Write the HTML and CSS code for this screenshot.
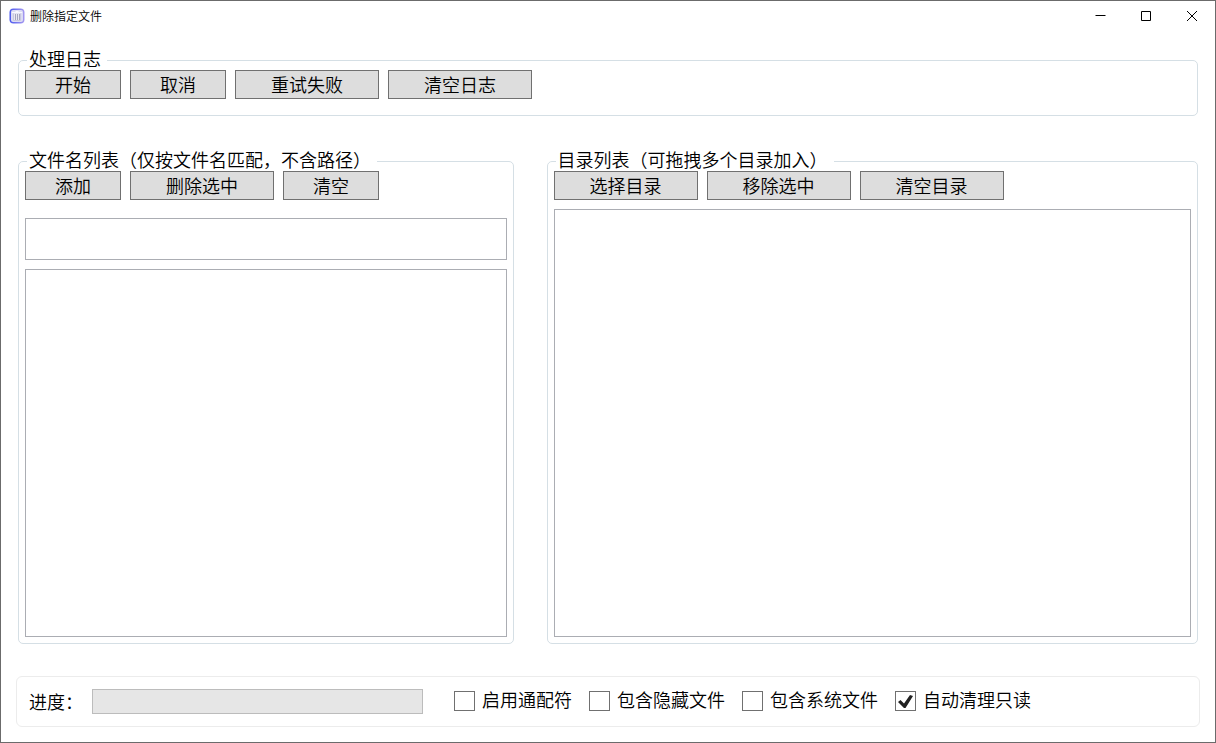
FILE: index.html
```
<!DOCTYPE html>
<html lang="zh-CN">
<head>
    <meta charset="UTF-8">
    <meta name="viewport" content="width=device-width, initial-scale=1.0">
    <link rel="stylesheet" href="styles.css">
    <title>删除指定文件</title>
</head>
<body>
    <header class="titlebar">
        <svg class="app-icon" width="16" height="16" viewBox="0 0 16 16">
            <defs>
                <linearGradient id="iconBg" x1="0" y1="0" x2="1" y2="0">
                    <stop offset="0" stop-color="#4a58ee"/>
                    <stop offset="1" stop-color="#a79af0"/>
                </linearGradient>
            </defs>
            <rect x="0.5" y="0.5" width="15" height="15" rx="4" fill="url(#iconBg)"/>
            <rect x="2" y="2" width="12" height="12" rx="2" fill="#dcdcf4"/>
            <path d="M3 4.5h10M6.500 3.500h3" stroke="#f8f8ff"/>
            <path d="M4.500 5.500v7h7v-7" fill="#e8e8f2" stroke="#c9c9de"/>
            <path d="M6.500 6v6M8.500 6v6M10.500 6v6" stroke="#a6a6c0"/>
        </svg>
        <h1>删除指定文件</h1>
        <div class="window-buttons">
            <button type="button" aria-label="最小化"><svg width="11" height="11" viewBox="0 0 11 11"><path d="M0.500 4.500h10"/></svg></button>
            <button type="button" aria-label="最大化"><svg width="11" height="11" viewBox="0 0 11 11"><path d="M0.500 0.500h9v9h-9z"/></svg></button>
            <button type="button" aria-label="关闭"><svg width="11" height="11" viewBox="0 0 11 11"><path d="M0 0l10 10M10 0l-10 10"/></svg></button>
        </div>
    </header>

    <main>
        <fieldset class="log">
            <legend>处理日志</legend>
            <div class="toolbar">
                <button type="button">开始</button>
                <button type="button">取消</button>
                <button type="button" class="wide">重试失败</button>
                <button type="button" class="wide">清空日志</button>
            </div>
        </fieldset>

        <div class="lists">
            <fieldset class="files">
                <legend>文件名列表（仅按文件名匹配，不含路径）</legend>
                <div class="toolbar">
                    <button type="button">添加</button>
                    <button type="button" class="wide">删除选中</button>
                    <button type="button">清空</button>
                </div>
                <input type="text" class="file-name" aria-label="文件名">
                <select class="list" multiple aria-label="文件名列表"></select>
            </fieldset>

            <fieldset class="folders">
                <legend>目录列表（可拖拽多个目录加入）</legend>
                <div class="toolbar">
                    <button type="button" class="wide">选择目录</button>
                    <button type="button" class="wide">移除选中</button>
                    <button type="button" class="wide">清空目录</button>
                </div>
                <select class="list" multiple aria-label="目录列表"></select>
            </fieldset>
        </div>

        <div class="status">
            <label for="progress">进度：</label>
            <progress id="progress" value="0" max="100"></progress>
            <div class="options">
                <label><input type="checkbox" name="wildcard"><span>启用通配符</span></label>
                <label><input type="checkbox" name="hidden"><span>包含隐藏文件</span></label>
                <label><input type="checkbox" name="system"><span>包含系统文件</span></label>
                <label><input type="checkbox" name="readonly" checked><span>自动清理只读</span></label>
            </div>
        </div>
    </main>
</body>
</html>
```
FILE: styles.css
```
* {
    box-sizing: border-box;
}

body {
    font-family: "Noto Sans CJK SC", sans-serif;
    font-size: 18px;
    font-weight: 350;
    color: #000;
    background: #fff;
    margin: 0;
    min-height: 100vh;
    border: 1px solid #6b6b6b;
    display: flex;
    flex-direction: column;
}

button,
input,
select {
    font: inherit;
    color: inherit;
    margin: 0;
    border-radius: 0;
}

.titlebar {
    display: flex;
    align-items: center;
    height: 30px;
    padding-left: 8px;
}

.titlebar h1 {
    flex: 1;
    margin: 0 0 0 5px;
    font-size: 12px;
    font-weight: 350;
    line-height: 16px;
}

.window-buttons {
    display: flex;
}

.window-buttons button {
    display: flex;
    align-items: center;
    justify-content: center;
    width: 46px;
    height: 30px;
    padding: 0;
    border: none;
    background: none;
}

.window-buttons button:hover {
    background: #e5e5e5;
}

.window-buttons path {
    fill: none;
    stroke: #000;
}

main {
    flex: 1;
    display: flex;
    flex-direction: column;
    padding: 20px 15px 15px;
}

fieldset {
    min-width: 0;
    margin: 0;
    padding: 1px 6px 6px;
    border: 1px solid #d5dfe5;
    border-radius: 5px;
}

legend {
    margin-left: 2px;
    padding: 0 6px 4px 2px;
    line-height: 14px;
}

.toolbar {
    display: flex;
    gap: 9px;
}

.toolbar button {
    width: 96px;
    height: 29px;
    padding: 0;
    border: 1px solid #707070;
    background: #ddd;
    line-height: 27px;
}

.toolbar .wide {
    width: 144px;
}

.toolbar button:hover {
    background: #bee6fd;
    border-color: #3c7fb1;
}

.log {
    margin: 0 2px;
    padding-bottom: 16px;
}

.lists {
    flex: 1;
    display: grid;
    grid-template-columns: 124fr 163fr;
    gap: 33px;
    margin: 36px 2px 32px;
}

.files,
.folders {
    display: flex;
    flex-direction: column;
}

.file-name {
    height: 42px;
    margin-top: 18px;
    padding: 0 6px;
    border: 1px solid #abadb3;
}

.list {
    flex: 1;
    width: 100%;
    margin-top: 9px;
    border: 1px solid #abadb3;
    background: #fff;
}

.status {
    display: flex;
    align-items: center;
    height: 51px;
    padding: 0 12px;
    border: 1px solid #ececec;
    border-radius: 6px;
}

.status > label {
    padding-bottom: 2px;
}

progress {
    appearance: none;
    width: 331px;
    height: 25px;
    margin-left: 9px;
    border: 1px solid #bcbcbc;
    background: #e6e6e6;
}

progress::-webkit-progress-bar {
    background: #e6e6e6;
}

progress::-webkit-progress-value {
    background: #06b025;
}

.options {
    display: flex;
    gap: 17px;
    margin-left: 31px;
    padding-bottom: 2px;
}

.options label {
    display: flex;
    align-items: center;
    gap: 7px;
    line-height: 24px;
}

.options span {
    padding-bottom: 4px;
}

.options input {
    appearance: none;
    width: 21px;
    height: 20px;
    border: 1px solid #707070;
    background: #fff;
}

.options input:checked {
    background: url("data:image/svg+xml,%3Csvg xmlns='http://www.w3.org/2000/svg' viewBox='0 0 19 18'%3E%3Cpath d='M2 10L4.500 8L8 11.500L14 3L17 4L9.500 16H8z' fill='%23212121'/%3E%3C/svg%3E") center / 19px 18px no-repeat;
}
```
